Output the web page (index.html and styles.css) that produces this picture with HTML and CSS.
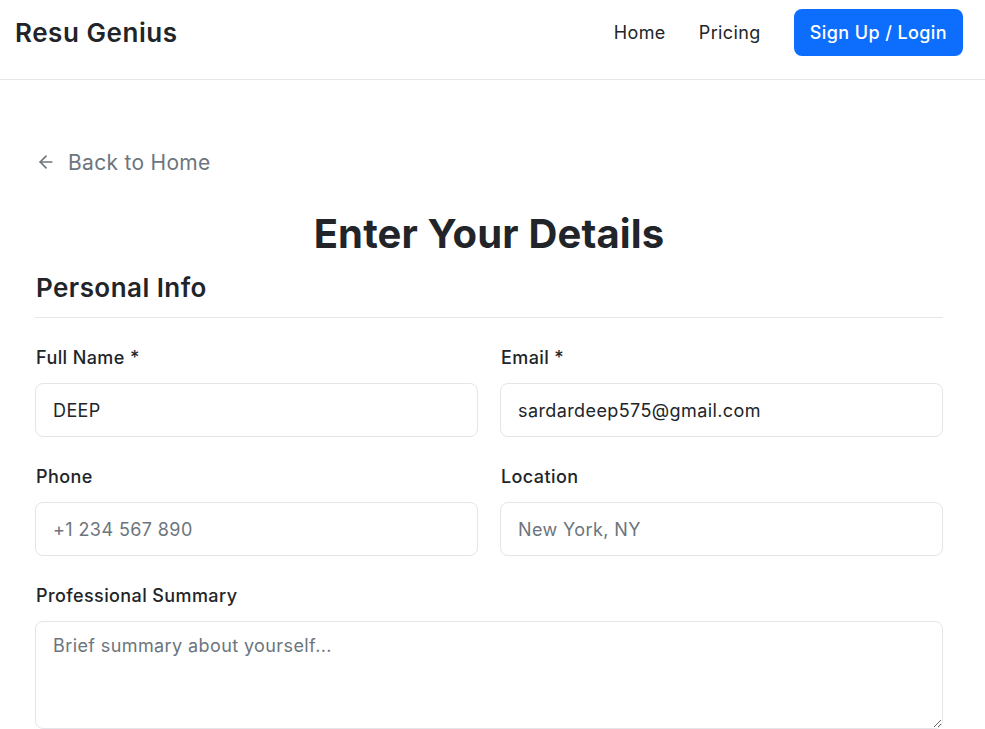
FILE: index.html
```html
<!DOCTYPE html>
<html lang="en">
<head>
<meta charset="utf-8">
<title>Resu Genius</title>
<link rel="stylesheet" href="styles.css">
</head>
<body>
<header class="topbar">
  <div class="brand">Resu Genius</div>
  <nav class="nav">
    <a class="nav-link" href="#">Home</a>
    <a class="nav-link" href="#">Pricing</a>
    <a class="btn-primary" href="#">Sign Up / Login</a>
  </nav>
</header>
<main class="container">
  <a class="back" href="#">
    <svg class="back-icon" width="20" height="20" viewBox="0 0 24 24" fill="none" stroke="currentColor" stroke-width="2" stroke-linecap="round" stroke-linejoin="round"><path d="M19 12H5"/><path d="M12 19l-7-7 7-7"/></svg>
    <span>Back to Home</span>
  </a>
  <h1 class="title">Enter Your Details</h1>
  <section class="section">
    <h2 class="section-title">Personal Info</h2>
    <div class="grid">
      <div class="field">
        <label class="label">Full Name *</label>
        <input class="input" type="text" value="DEEP">
      </div>
      <div class="field">
        <label class="label">Email *</label>
        <input class="input" type="text" value="sardardeep575@gmail.com">
      </div>
      <div class="field">
        <label class="label">Phone</label>
        <input class="input" type="text" placeholder="+1 234 567 890">
      </div>
      <div class="field">
        <label class="label">Location</label>
        <input class="input" type="text" placeholder="New York, NY">
      </div>
      <div class="field full">
        <label class="label">Professional Summary</label>
        <textarea class="input textarea" placeholder="Brief summary about yourself..."></textarea>
      </div>
    </div>
  </section>
</main>
</body>
</html>
```
FILE: styles.css
```css
* { box-sizing: border-box; }
html, body { margin: 0; padding: 0; background: #fff; }
body {
  font-family: Inter, "Noto Sans", sans-serif;
  color: #212529;
  overflow: hidden;
}
a { text-decoration: none; }
.topbar {
  height: 80px;
  border-bottom: 1px solid #e5e7eb;
  display: flex;
  align-items: center;
  justify-content: space-between;
  padding: 9px 22px 23px 15px;
}
.brand {
  font-size: 26px;
  font-weight: 600;
  color: #212529;
  letter-spacing: 0.55px;
}
.nav { display: flex; align-items: center; }
.nav-link {
  font-size: 18px;
  color: #212529;
  letter-spacing: 0.4px;
  margin-right: 33px;
}
.btn-primary {
  display: inline-flex;
  align-items: center;
  height: 47px;
  padding: 0 16px;
  background: #0d6efd;
  color: #fff;
  border-radius: 8px;
  font-size: 18px;
  font-weight: 500;
  letter-spacing: 0.4px;
}
.container {
  margin-left: 35px;
  width: 908px;
  padding-top: 69px;
}
.back {
  display: inline-flex;
  align-items: center;
  color: #6c757d;
  font-size: 21px;
  letter-spacing: 0.3px;
  height: 26px;
}
.back-icon { margin-left: 1px; margin-right: 12px; }
.title {
  margin: 34px 0 0;
  text-align: center;
  font-size: 40px;
  font-weight: 700;
  letter-spacing: 0.15px;
  line-height: 48px;
  color: #212529;
}
.section-title {
  margin: 13px 0 0;
  font-size: 26px;
  font-weight: 600;
  letter-spacing: 0.45px;
  line-height: 34px;
  padding-bottom: 12px;
  padding-left: 1px;
  border-bottom: 1px solid #e5e7eb;
}
.grid {
  display: grid;
  grid-template-columns: 1fr 1fr;
  column-gap: 22px;
  row-gap: 27px;
  padding-top: 27px;
}
.field { display: flex; flex-direction: column; }
.field.full { grid-column: 1 / -1; }
.label {
  font-size: 18px;
  font-weight: 500;
  letter-spacing: 0.4px;
  line-height: 26px;
  margin-bottom: 12px;
  padding-left: 1px;
  color: #212529;
}
.input {
  height: 54px;
  border: 1px solid #e3e5e8;
  border-radius: 8px;
  padding: 0 17px;
  font-family: Inter, "Noto Sans", sans-serif;
  font-size: 18px;
  letter-spacing: 0.4px;
  color: #212529;
  outline: none;
  background: #fff;
  width: 100%;
}
.input::placeholder { color: #6c757d; }
.textarea {
  height: 108px;
  padding: 12px 17px;
  resize: vertical;
  line-height: 24px;
}
```
